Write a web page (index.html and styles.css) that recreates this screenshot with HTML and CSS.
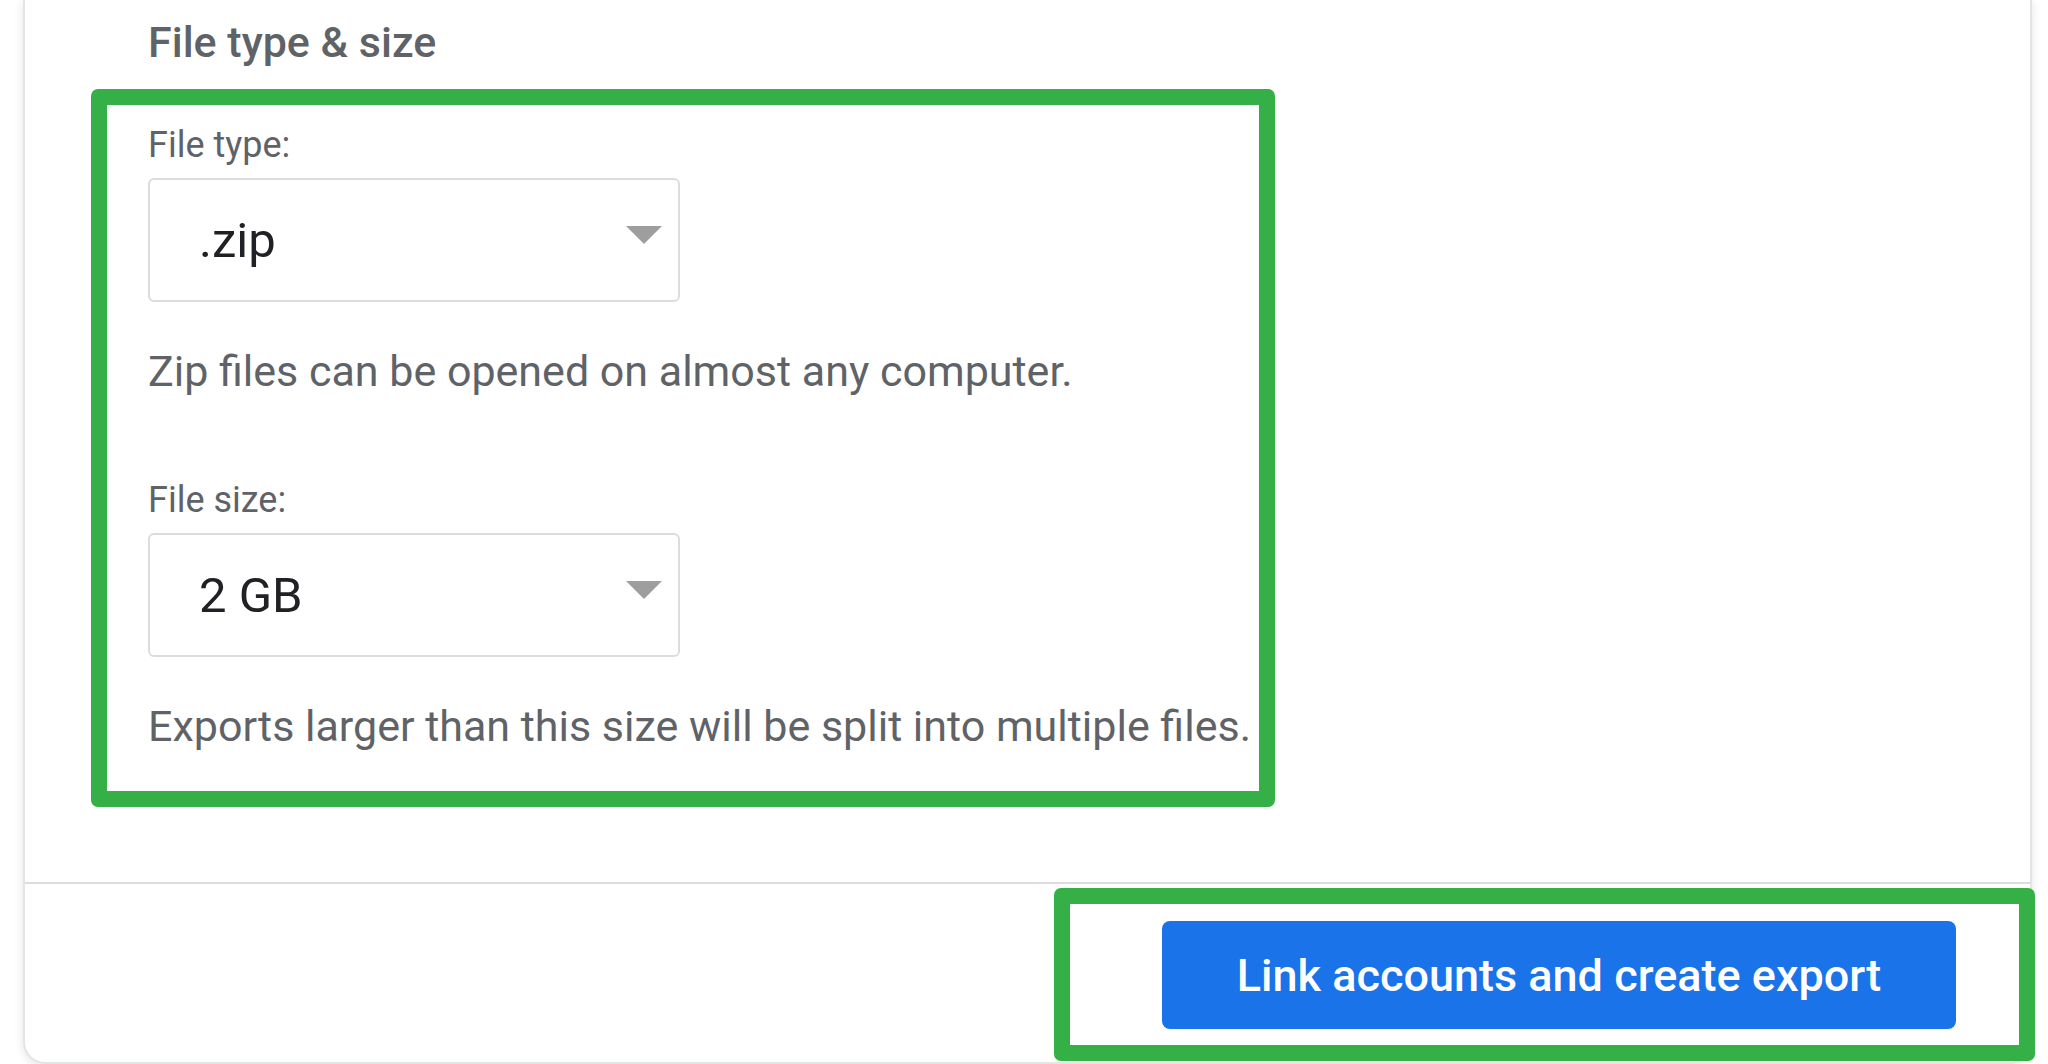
FILE: index.html
```html
<!DOCTYPE html>
<html lang="en">
<head>
    <meta charset="UTF-8">
    <meta name="viewport" content="width=device-width, initial-scale=1.0">
    <title>Export settings</title>
    <link rel="stylesheet" href="styles.css">
</head>
<body>
    <main class="card">
        <section class="card-body">
            <h2 class="section-title">File type &amp; size</h2>
            <div class="highlight options">
                <label class="field-label" for="fileType">File type:</label>
                <div class="select">
                    <span class="select-value" id="fileType">.zip</span>
                    <span class="select-arrow"></span>
                </div>
                <p class="help">Zip files can be opened on almost any computer.</p>

                <label class="field-label field-gap" for="fileSize">File size:</label>
                <div class="select">
                    <span class="select-value" id="fileSize">2 GB</span>
                    <span class="select-arrow"></span>
                </div>
                <p class="help">Exports larger than this size will be split into multiple files.</p>
            </div>
        </section>
        <footer class="card-footer">
            <div class="highlight action">
                <button class="primary-btn">Link accounts and create export</button>
            </div>
        </footer>
    </main>
</body>
</html>
```

FILE: styles.css
```css
html{
    font-family: Roboto, "Noto Sans", sans-serif;
    background-color: #fff;
}

body{
    margin: 0;
    height: 1064px;
    overflow: hidden;
    padding-left: 23px;
    padding-right: 16px;
}

.card{
    background-color: #fff;
    border: 2px solid #e3e4e6;
    border-top: none;
    border-radius: 0 0 22px 22px;
    height: 1062px;
    display: flex;
    flex-direction: column;
    box-shadow: 0 2px 10px rgba(60, 64, 67, 0.14);
}

.card-body{
    flex: 1;
    padding-left: 66px;
}

.section-title{
    margin: 14px 0 0 57px;
    font-size: 43px;
    line-height: 56px;
    font-weight: 500;
    color: #5f6368;
}

.highlight{
    border: 16px solid #35b047;
    border-radius: 7px;
}

.options{
    margin-top: 19px;
    width: 1111px;
    padding: 20px 0 41px 41px;
}

.field-label{
    display: block;
    font-size: 36px;
    line-height: 40px;
    color: #5f6368;
}

.field-gap{
    margin-top: 85px;
}

.select{
    margin-top: 13px;
    width: 532px;
    height: 124px;
    border: 2px solid #dadce0;
    border-radius: 6px;
    display: flex;
    align-items: center;
    justify-content: space-between;
    padding: 0 16px 0 49px;
    box-sizing: border-box;
}

.select-value{
    font-size: 49px;
    color: #202124;
}

.select-arrow{
    width: 0;
    height: 0;
    border-left: 18px solid transparent;
    border-right: 18px solid transparent;
    border-top: 18px solid #9e9e9e;
    margin-bottom: 10px;
}

.help{
    margin: 45px 0 0;
    font-size: 43px;
    line-height: 48px;
    color: #5f6368;
}

.card-footer{
    height: 178px;
    border-top: 2px solid #dadce0;
    display: flex;
    justify-content: flex-end;
    align-items: flex-end;
}

.action{
    width: 981px;
    height: 173px;
    margin-right: -5px;
    margin-bottom: 1px;
    padding: 17px 63px 0 92px;
    box-sizing: border-box;
    display: flex;
    justify-content: flex-end;
    align-items: flex-start;
}

.primary-btn{
    width: 794px;
    height: 108px;
    background-color: #1a73e8;
    color: #fff;
    border: none;
    border-radius: 8px;
    font-family: Roboto, sans-serif;
    font-size: 45px;
    font-weight: 500;
}
```
